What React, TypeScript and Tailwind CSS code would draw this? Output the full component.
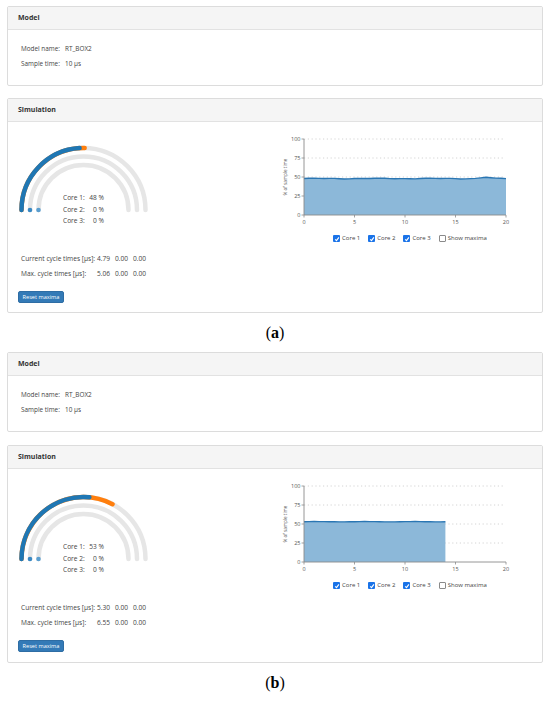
import React from "react";

type FigureProps = {
  label: string;
  cur: number[];
  max: number[];
  cycle: string[];
  maxCycle: string[];
  series: [number, number][];
  late?: boolean;
};

const panel = "border border-[#dcdcdc] rounded-[2px] bg-white";
const head =
  "h-[23px] flex items-center px-[10px] bg-[#f5f5f5] border-b border-[#e2e2e2] text-[7px] font-bold text-[#333]";

const Gauge: React.FC<{ cur: number[]; max: number[] }> = ({ cur, max }) => {
  const cx = 65.5;
  const cy = 67;
  const radii = [62, 53.5, 45];
  const blues = ["#1f77b4", "#3a89c3", "#5a9ecf"];

  const pt = (r: number, f: number) =>
    `${(cx - r * Math.cos(Math.PI * f)).toFixed(2)} ${(cy - r * Math.sin(Math.PI * f)).toFixed(2)}`;
  const arc = (r: number, f0: number, f1: number) =>
    `M ${pt(r, f0)} A ${r} ${r} 0 0 1 ${pt(r, f1)}`;

  return (
    <svg width="134" height="74" viewBox="0 0 134 74">
      {radii.map((r) => (
        <path key={"bg" + r} d={arc(r, 0, 1)} fill="none" stroke="#e6e6e6" strokeWidth="4.5" strokeLinecap="round" />
      ))}
      {radii.map((r, i) =>
        max[i] > cur[i] ? (
          <path key={"mx" + r} d={arc(r, 0, max[i])} fill="none" stroke="#ff7f0e" strokeWidth="4.5" strokeLinecap="round" />
        ) : null
      )}
      {radii.map((r, i) =>
        cur[i] > 0 ? (
          <path key={"cu" + r} d={arc(r, 0, cur[i])} fill="none" stroke={blues[i]} strokeWidth="4.5" strokeLinecap="round" />
        ) : (
          <circle key={"dot" + r} cx={cx - r} cy={cy} r="2.3" fill={blues[i]} />
        )
      )}
    </svg>
  );
};

const Check: React.FC<{ on: boolean }> = ({ on }) =>
  on ? (
    <span className="w-[7px] h-[7px] rounded-[1px] bg-[#1a73e8] flex items-center justify-center">
      <svg width="6" height="6" viewBox="0 0 6 6">
        <path d="M1.2 3.3 L2.5 4.6 L4.9 1.4" fill="none" stroke="#fff" strokeWidth="1.1" />
      </svg>
    </span>
  ) : (
    <span className="w-[7px] h-[7px] rounded-[1px] border border-[#8a8a8a] bg-white" />
  );

const Chart: React.FC<{ series: [number, number][] }> = ({ series }) => {
  const x0 = 28;
  const x1 = 230;
  const y0 = 7;
  const y1 = 83;
  const sx = (x: number) => x0 + (x / 20) * (x1 - x0);
  const sy = (v: number) => y1 - (v / 100) * (y1 - y0);

  const last = series[series.length - 1][0];
  const line = series.map(([x, v], i) => `${i ? "L" : "M"} ${sx(x).toFixed(2)} ${sy(v).toFixed(2)}`).join(" ");
  const area = `M ${sx(0)} ${sy(0)} ${line.replace(/^M/, "L")} L ${sx(last)} ${sy(0)} Z`;

  return (
    <svg width="258" height="95" viewBox="0 0 258 95" className="font-['Open_Sans',sans-serif]">
      {[25, 50, 75, 100].map((v) => (
        <line key={v} x1={x0} x2={x1 - 2} y1={sy(v)} y2={sy(v)} stroke="#c9c9c9" strokeWidth="0.8" strokeDasharray="1.2 2.6" />
      ))}
      <path d={area} fill="#8cb8d9" />
      <path d={line} fill="none" stroke="#2a76b3" strokeWidth="1.4" />
      <line x1={x0} x2={x0} y1={y0} y2={y1} stroke="#8a8a8a" strokeWidth="0.9" />
      <line x1={x0} x2={x1} y1={y1} y2={y1} stroke="#8a8a8a" strokeWidth="0.9" />
      {[0, 25, 50, 75, 100].map((v) => (
        <g key={"y" + v}>
          <line x1={x0 - 2.5} x2={x0} y1={sy(v)} y2={sy(v)} stroke="#8a8a8a" strokeWidth="0.8" />
          <text x={x0 - 3.5} y={sy(v) + 1.9} fontSize="5.5" fill="#555" textAnchor="end">
            {v}
          </text>
        </g>
      ))}
      {[0, 5, 10, 15, 20].map((v) => (
        <g key={"x" + v}>
          <line x1={sx(v)} x2={sx(v)} y1={y1} y2={y1 + 2.5} stroke="#8a8a8a" strokeWidth="0.8" />
          <text x={sx(v)} y={y1 + 9} fontSize="5.5" fill="#555" textAnchor="middle">
            {v}
          </text>
        </g>
      ))}
      <text
        x="0"
        y="0"
        fontSize="4.6"
        fill="#555"
        textAnchor="middle"
        transform={`translate(11 ${(y0 + y1) / 2}) rotate(-90)`}
      >
        % of sample time
      </text>
    </svg>
  );
};

const Figure: React.FC<FigureProps> = ({ label, cur, max, cycle, maxCycle, series, late }) => (
  <div>
    <div className={`${panel} h-[80px]`}>
      <div className={head}>Model</div>
      <div className="pt-[11px] px-[13px] grid grid-cols-[auto_auto] justify-start gap-x-[5px] text-[6.4px] text-[#444] leading-[15px] whitespace-nowrap">
        <span>Model name:</span>
        <span>RT_BOX2</span>
        <span>Sample time:</span>
        <span>10 µs</span>
      </div>
    </div>

    <div className={`${panel} ${late ? "mt-[13px] h-[218px]" : "mt-[12px] h-[215px]"}`}>
      <div className={head}>Simulation</div>
      <div className="flex px-[10px]">
        <div className={`w-[258px] shrink-0 ${late ? "pt-[23px]" : "pt-[21px]"}`}>
          <div className="relative h-[85px]">
            <Gauge cur={cur} max={max} />
            <div className="absolute left-[45px] top-[49px] text-[6.6px] text-[#444] leading-[11.5px] whitespace-nowrap">
              {cur.map((c, i) => (
                <div key={i} className="flex">
                  <span className="w-[22px]">Core {i + 1}:</span>
                  <span className="w-[19px] text-right">{Math.round(c * 100)} %</span>
                </div>
              ))}
            </div>
          </div>
          <div className="mt-[23px] text-[6.6px] text-[#444] leading-[15px] whitespace-nowrap">
            <div className="flex">
              <span className="w-[79px] pl-[3px]">Current cycle times [µs]:</span>
              {cycle.map((v, i) => (
                <span key={i} className="w-[18px]">{v}</span>
              ))}
            </div>
            <div className="flex">
              <span className="w-[79px] pl-[3px]">Max. cycle times [µs]:</span>
              {maxCycle.map((v, i) => (
                <span key={i} className="w-[18px]">{v}</span>
              ))}
            </div>
          </div>
          <button className="mt-[10px] h-[12px] w-[46px] rounded-[2px] bg-[#337ab7] border border-[#2e6da4] text-white text-[5.6px] flex items-center justify-center whitespace-nowrap">
            Reset maxima
          </button>
        </div>
        <div className="flex-1 pt-[10px]">
          <Chart series={series} />
          <div className="mt-[7px] flex items-center justify-center gap-[8px] pl-[10px] text-[6px] text-[#444] whitespace-nowrap">
            {["Core 1", "Core 2", "Core 3"].map((c) => (
              <span key={c} className="flex items-center gap-[2px]">
                <Check on />
                {c}
              </span>
            ))}
            <span className="flex items-center gap-[2px]">
              <Check on={false} />
              Show maxima
            </span>
          </div>
        </div>
      </div>
    </div>

    <div className={`flex items-center justify-center font-['Liberation_Serif',serif] text-[16px] text-black ${late ? "h-[40px]" : "h-[39px]"}`}>
      (<span className="font-bold">{label}</span>)
    </div>
  </div>
);

const makeSeries = (end: number, base: number, wobble: (x: number) => number) => {
  const pts: [number, number][] = [];
  for (let x = 0; x <= end + 0.001; x += 0.5) pts.push([x, base + wobble(x)]);
  return pts;
};

export default function App() {
  const seriesA = makeSeries(20, 48, (x) => 0.35 * Math.sin(x * 1.1) + 0.25 * Math.sin(x * 2.7) + (Math.abs(x - 18) < 1 ? 1.6 * (1 - Math.abs(x - 18)) : 0));
  const seriesB = makeSeries(14, 53, (x) => 0.2 * Math.sin(x * 1.3));

  return (
    <div className="w-[550px] h-[703px] overflow-hidden bg-white pt-[6px] px-[7px] font-['Open_Sans',sans-serif]">
      <Figure
        label="a"
        cur={[0.48, 0, 0]}
        max={[0.506, 0, 0]}
        cycle={["4.79", "0.00", "0.00"]}
        maxCycle={["5.06", "0.00", "0.00"]}
        series={seriesA}
      />
      <Figure
        label="b"
        cur={[0.53, 0, 0]}
        max={[0.655, 0, 0]}
        cycle={["5.30", "0.00", "0.00"]}
        maxCycle={["6.55", "0.00", "0.00"]}
        series={seriesB}
        late
      />
    </div>
  );
}
